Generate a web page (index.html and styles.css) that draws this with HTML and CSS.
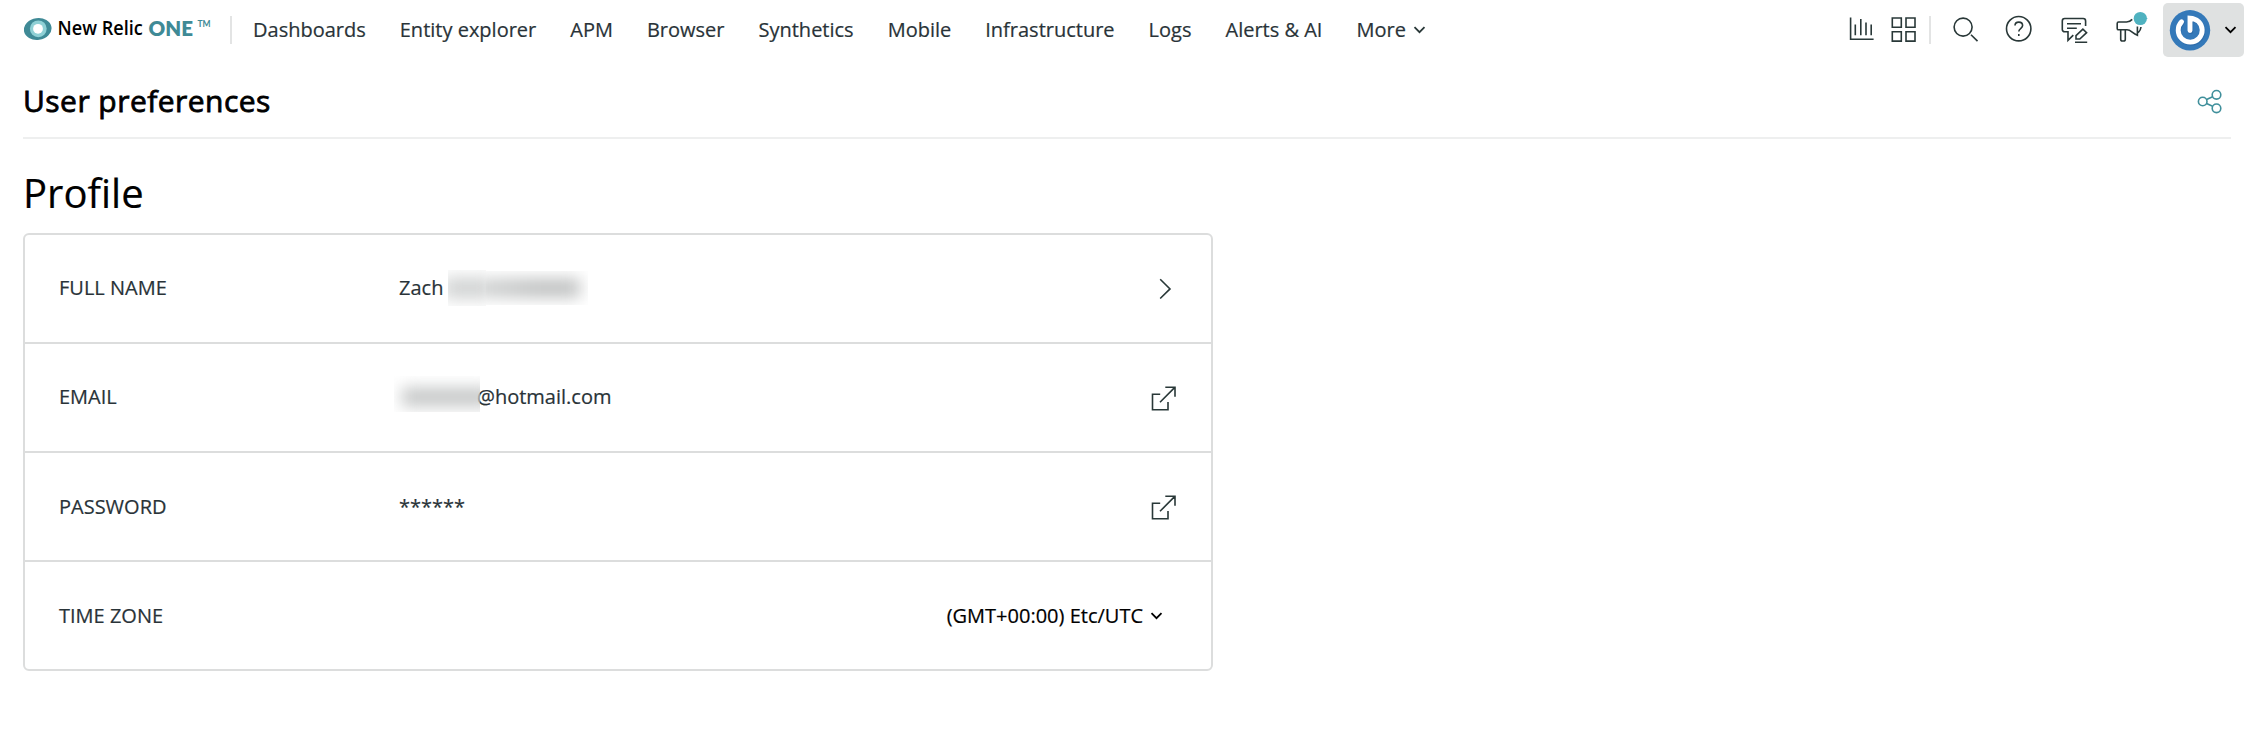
FILE: index.html
```html
<!DOCTYPE html>
<html lang="en">
<head>
<meta charset="utf-8">
<title>User preferences</title>
<link rel="stylesheet" href="styles.css">
</head>
<body>
<header class="topbar">
  <svg class="logo" width="188" height="60" viewBox="24 0 188 60" role="img" aria-label="New Relic ONE">
    <ellipse cx="37.7" cy="29" rx="13.9" ry="10.9" transform="rotate(-8 37.7 29)" fill="#3f8a96"/>
    <circle cx="38.3" cy="28.8" r="8.4" fill="#8fd0d5"/>
    <circle cx="38" cy="28.8" r="4.9" fill="#fff"/>
    <g transform="translate(57.5 35.3) scale(.885 1)"><text class="logo-name">New Relic</text></g>
    <text class="logo-one" x="148.5" y="36">ONE</text>
    <text class="logo-tm" x="197.5" y="27">TM</text>
  </svg>
  <span class="separator separator-nav"></span>
  <nav class="nav">
    <a>Dashboards</a><a>Entity explorer</a><a>APM</a><a>Browser</a><a>Synthetics</a><a>Mobile</a><a>Infrastructure</a><a>Logs</a><a>Alerts &amp; AI</a>
    <a class="more">More <svg class="icon bold" width="13" height="8" viewBox="0 0 13 8"><path d="M1.5 1.2l5 5 5-5"/></svg></a>
  </nav>
  <div class="tools">
    <svg class="icon" width="36" height="60" viewBox="1846 0 36 60"><path d="M1850.6 17.5V39.2H1873.6M1855.3 24.5V35.3M1860.8 19V35.3M1866 22.6V35.3M1871.2 24.6V35.3"/></svg>
    <svg class="icon" width="46" height="60" viewBox="1882 0 46 60"><path d="M1892.3 18h9v9.3h-9zM1906 18h9v9.3h-9zM1892.3 31.8h9v9.3h-9zM1906 31.8h9v9.3h-9z"/></svg>
    <span class="separator"></span>
    <svg class="icon" width="60" height="60" viewBox="1932 0 60 60"><circle cx="1963.1" cy="27.1" r="9"/><path d="M1971 34.8l6.5 6.3"/></svg>
    <svg class="icon" width="54" height="60" viewBox="1992 0 54 60"><circle cx="2018.7" cy="28.7" r="12.2"/><path d="M2015 25.6c0-4.7 7.6-4.7 7.6 0 0 2.8-3.8 2.6-3.8 6M2018.8 34v2"/></svg>
    <svg class="icon" width="58" height="60" viewBox="2046 0 58 60"><path d="M2085.6 26V20.9a2.4 2.4 0 0 0-2.4-2.4H2064.7a2.4 2.4 0 0 0-2.4 2.4V29.4a2.4 2.4 0 0 0 2.4 2.4H2068V40.3L2073.3 35.2M2067 23.7H2081M2067 28.2H2076.8M2076 39V35.6L2082.9 29.1 2086.6 32.7 2079.8 39ZM2075 42.3H2087.2"/></svg>
    <svg class="icon" width="59" height="60" viewBox="2104 0 59 60"><path d="M2132.2 19.4C2130.4 21.4 2128.6 22 2126.5 22H2118.6a1.4 1.4 0 0 0-1.4 1.4V28.4a1.4 1.4 0 0 0 1.4 1.4H2127C2131 29.8 2132 33 2137.4 35.2V26.5M2120.7 30V39.2a1.8 1.8 0 0 0 1.8 1.8h1a1.8 1.8 0 0 0 1.8-1.8V30M2141 27Q2140.7 30.4 2138.2 32.7"/><circle class="notice" cx="2140.3" cy="18.5" r="6.6"/><path class="notice" d="M2145.5 17.4l2.4.8-2.4 1.4z"/></svg>
    <div class="account">
      <svg width="42" height="42" viewBox="2169 9 42 42"><circle cx="2190" cy="30.3" r="20.2" fill="#3479b9"/><path d="M2181.6 21.8A12 12 0 1 0 2198.5 21.5Q2195 18.5 2190 18.2V30.5" fill="none" stroke="#245b94" stroke-width="5.2" stroke-linecap="round" opacity=".4" transform="translate(.6 .9)"/><path d="M2181.6 21.8A12 12 0 1 0 2198.5 21.5Q2195 18.5 2190 18.2V30.5" fill="none" stroke="#fff" stroke-width="4.9" stroke-linecap="round"/></svg>
      <svg class="icon bold black" width="13" height="8" viewBox="0 0 13 8"><path d="M1.5 1.2l5 5 5-5"/></svg>
    </div>
  </div>
</header>
<div class="titlebar">
  <h1>User preferences</h1>
  <svg class="icon share" width="26" height="26" viewBox="2197 88 26 26"><circle cx="2202.7" cy="101.5" r="4.3"/><circle cx="2216.5" cy="94.8" r="4.3"/><circle cx="2216.5" cy="108.3" r="4.3"/><path d="M2206.6 99.4l6-2.7M2206.6 103.5l6 2.8"/></svg>
</div>
<main>
  <h2>Profile</h2>
  <section class="card">
    <div class="row raised">
      <span class="label">FULL NAME</span>
      <span class="value">Zach <span class="redact first"></span><span class="redact last"></span></span>
      <svg class="icon" width="26" height="26" viewBox="1151 276 26 26"><path d="M1160.2 279.3l9.8 9.6-9.8 9.6"/></svg>
    </div>
    <div class="row raised">
      <span class="label">EMAIL</span>
      <span class="value"><span class="redact mail"></span>@hotmail.com</span>
      <svg class="icon" width="26" height="26" viewBox="1151 384 26 26"><path d="M1160.2 393.3H1152.5V408.8H1168V401M1160 401.3L1174.8 386.4M1165.3 386.2H1175V395.7"/></svg>
    </div>
    <div class="row">
      <span class="label">PASSWORD</span>
      <span class="value">******</span>
      <svg class="icon" width="26" height="26" viewBox="1151 384 26 26"><path d="M1160.2 393.3H1152.5V408.8H1168V401M1160 401.3L1174.8 386.4M1165.3 386.2H1175V395.7"/></svg>
    </div>
    <div class="row">
      <span class="label">TIME ZONE</span>
      <span class="zone">(GMT+00:00) Etc/UTC <svg class="icon bold black" width="13" height="8" viewBox="0 0 13 8"><path d="M1.5 1.2l5 5 5-5"/></svg></span>
    </div>
  </section>
</main>
</body>
</html>
```
FILE: styles.css
```css
* { box-sizing: border-box; }
body { margin: 0; background: #fff; color: #293338; font: 20px/28px "Open Sans", "Noto Sans", sans-serif; -webkit-text-stroke: .2px currentColor; }
svg { display: block; flex: none; }
.icon { fill: none; stroke: #293838; stroke-width: 1.6; }
.icon.bold { stroke-width: 1.8; }
.icon.black { stroke: #000; }
.topbar { display: flex; align-items: center; height: 60px; padding: 0 8px 0 24px; }
.logo { -webkit-text-stroke: 0; }
.logo-name { font-size: 20.5px; font-weight: 600; fill: #000; }
.logo-one { font: 800 20.5px Lato, sans-serif; fill: #3f8a96; }
.logo-tm { font: 700 8.5px Lato, sans-serif; fill: #3f8a96; }
.separator { width: 2px; height: 28px; margin: 0 1px; background: #e3e4e4; }
.separator-nav { margin: 0 20px 0 18px; }
.nav { display: flex; gap: 34px; margin-left: 1px; white-space: nowrap; }
.more { display: flex; align-items: center; gap: 7px; }
.tools { display: flex; align-items: center; margin-left: auto; }
.account { display: flex; align-items: center; gap: 13px; width: 81px; height: 54px; padding-left: 6px; border-radius: 5px; background: #dfe1e1; }
.notice { fill: #4fb2c0; stroke: none; }
.titlebar { display: flex; align-items: center; justify-content: space-between; height: 79px; margin: 0 21px 0 23px; padding: 5px 8px 0 0; border-bottom: 2px solid #eeefef; }
h1 { margin: 0; color: #000; font-size: 30px; font-weight: 400; line-height: 40px; letter-spacing: .46px; -webkit-text-stroke: .8px #000; }
.share { stroke: #3f8f9b; }
main { padding: 27px 23px 0; }
h2 { margin: 0 0 13px; color: #000; font-size: 40px; font-weight: 400; line-height: 54px; }
.card { width: 1190px; border: 2px solid #dcdddd; border-radius: 6px; }
.row { display: flex; align-items: center; height: 109px; padding: 0 34px; border-bottom: 2px solid #dcdddd; }
.row:last-child { height: 107px; border-bottom: 0; }
.label { width: 340px; }
.raised .label, .raised .value { padding-bottom: 1px; }
.value { display: flex; align-items: center; flex: 1; white-space: pre; }
.zone { display: flex; align-items: center; gap: 7px; margin: 0 14px 0 auto; color: #000; }
.redact { display: block; overflow: hidden; }
.redact::before { content: ""; display: block; filter: blur(8px); background: #c3c5c5; }
.first { width: 38px; height: 36px; margin-left: -1px; }
.first::before { width: 50px; height: 22px; margin: 7px 0 0 -4px; background: #d2d4d4; }
.last { width: 102px; height: 34px; }
.last::before { height: 18px; margin: 8px 8px 0 -12px; background: linear-gradient(90deg, #d0d2d2, #bcbebe 60%); }
.mail { width: 86px; height: 36px; margin: -6px -3px 0 -5px; }
.mail::before { height: 18px; margin: 12px -12px 0 8px; }
```
